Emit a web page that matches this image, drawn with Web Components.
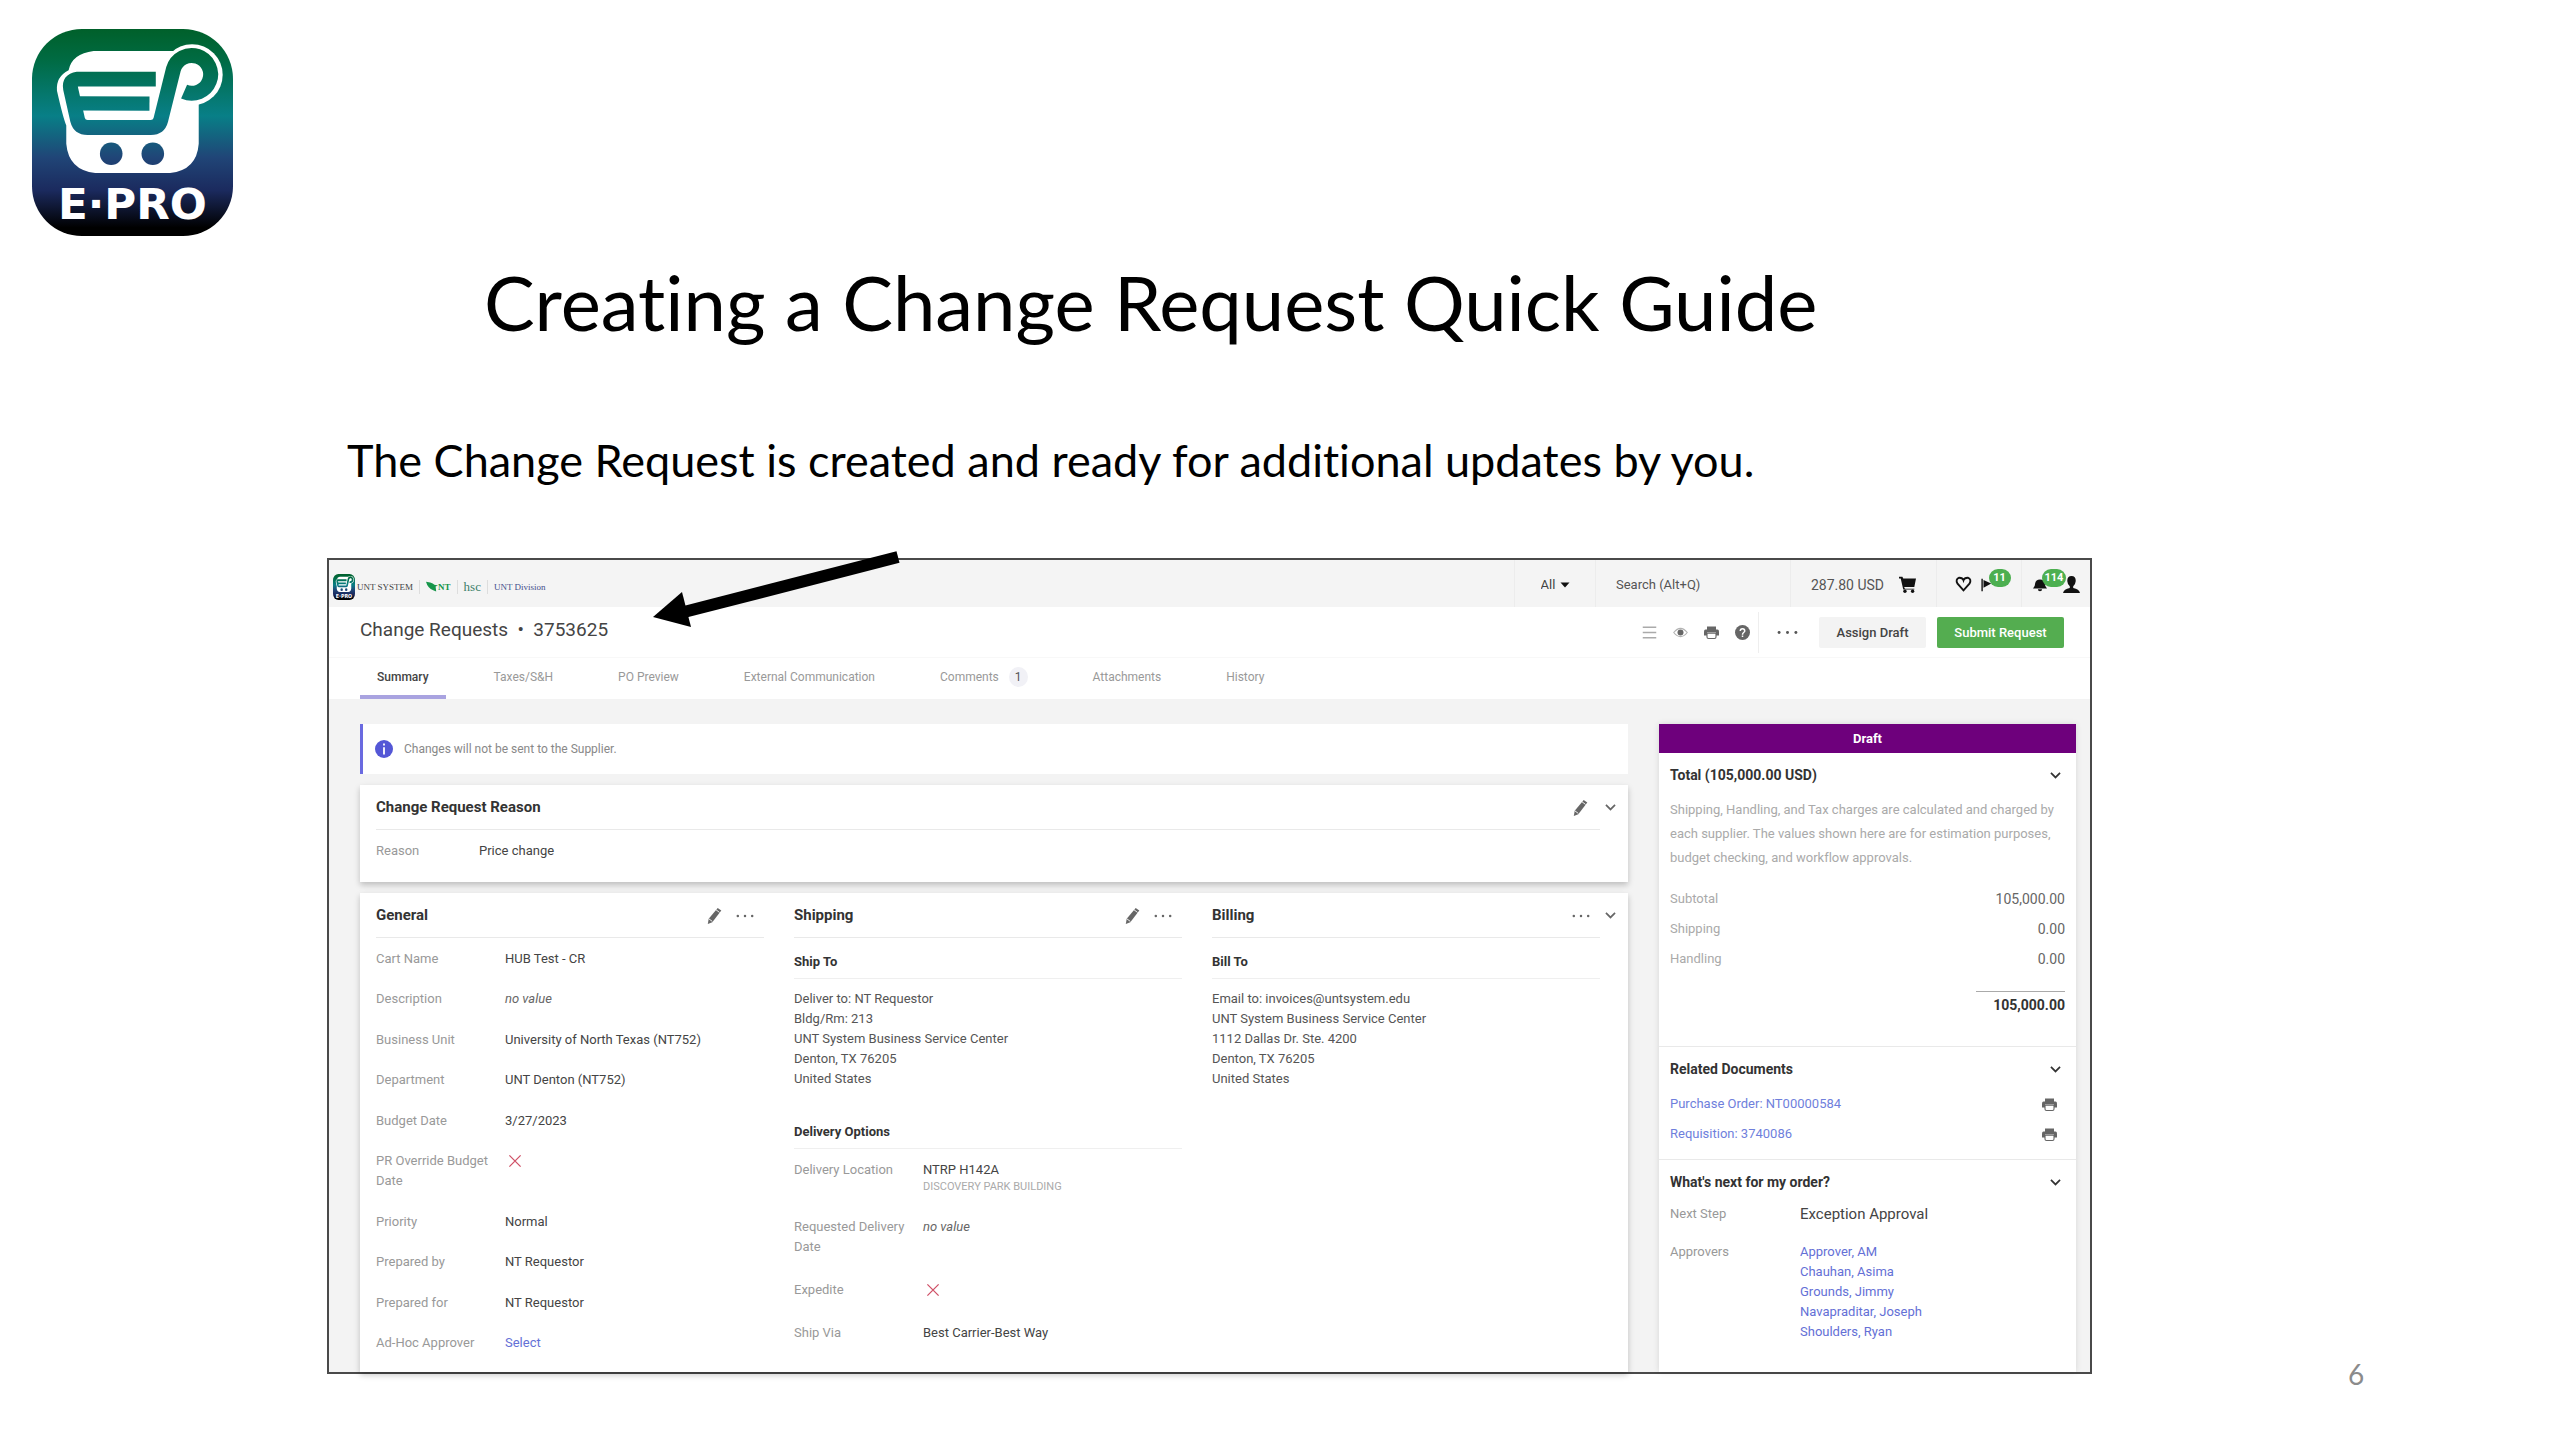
<!DOCTYPE html>
<html lang="en">
<head>
<meta charset="utf-8">
<title>Creating a Change Request Quick Guide</title>
<style>
  body {
    margin: 0;
    background: #fff;
    color: #000;
    font-family: Lato, sans-serif;
  }
</style>
</head>
<body>
<guide-slide page="6">
  <epro-logo slot="logo"></epro-logo>
  <span slot="title">Creating a Change Request Quick Guide</span>
  <span slot="text">The Change Request is created and ready for additional updates by you.</span>
  <request-screen></request-screen>
</guide-slide>

<script>
const ICONS = {
  pencil: '<path fill="currentColor" d="M2 19l1-6L13 1l4 3L7 17z"/><path stroke="#fff" d="M11 3l4 3M3 13l4 3"/>',
  chevron: '<path fill="none" stroke="currentColor" stroke-width="2.6" d="M3 6l7 7 7-7"/>',
  dots: '<g fill="currentColor"><circle cx="2" cy="10" r="1.4"/><circle cx="10" cy="10" r="1.4"/><circle cx="18" cy="10" r="1.4"/></g>',
  list: '<path stroke="currentColor" stroke-width="2" d="M1 3h18M1 10h18M1 17h18"/>',
  eye: '<path fill="none" stroke="currentColor" stroke-width="1.5" opacity="0.5" d="M1 10q9-11 18 0q-9 11-18 0z"/><circle cx="10" cy="10" r="4" fill="currentColor"/>',
  printer: '<path fill="currentColor" d="M4 2h12v4H4zM2 6h16q2 0 2 3v5h-4v-4H4v4H0V9q0-3 2-3z"/><path fill="#fff" stroke="currentColor" stroke-width="1.5" d="M4 11h12v5q0 2-2 2H6q-2 0-2-2z"/>',
  help: '<circle cx="10" cy="10" r="10" fill="currentColor"/><path fill="none" stroke="#fff" stroke-width="2" d="M7 8q0-3 3-3t3 3q0 1-1.500 2T10 13M10 14v2"/>',
  cart: '<path fill="currentColor" d="M0 1h4l1 2h15l-2 10H6l1 2h11v1H5L2 3H0z"/><circle cx="7" cy="18" r="2" fill="currentColor"/><circle cx="16" cy="18" r="2" fill="currentColor"/>',
  heart: '<path fill="none" stroke="currentColor" stroke-width="2.200" d="M10 17L3 9q-3-5 2-7 4 0 5 3 1-3 5-3 5 2 2 7z"/>',
  flag: '<path stroke="currentColor" stroke-width="2" d="M3 1v18"/><path fill="currentColor" d="M5 3l11 5-11 6z"/>',
  bell: '<path fill="currentColor" d="M0 15q3-2 3-7 1-6 7-6t7 6q0 5 3 7zM7 16h6q0 3-3 3t-3-3z"/>',
  person: '<path fill="currentColor" d="M10 0q5 0 5 6 0 3-3 6v2q7 1 8 6H0q1-5 8-6v-2q-3-3-3-6 0-6 5-6z"/>',
  cross: '<path stroke="currentColor" stroke-width="1.800" d="M2 2l16 16M18 2L2 18"/>',
  info: '<circle cx="10" cy="10" r="10" fill="currentColor"/><path stroke="#fff" stroke-width="2" d="M10 4v2M10 8v8"/>',
  caret: '<path fill="currentColor" d="M1 5h18l-9 10z"/>',
  eagle: '<path fill="currentColor" d="M0 3l7 1q5 1 7 4l6 1-4 2 1 8-5-2Q3 14 0 3z"/>'
};

/**
 * ui-icon - small line icon, sized with --size
 */
class UiIcon extends HTMLElement {
  connectedCallback() {
    this.attachShadow({ mode: 'open' }).innerHTML = `
      <style>
        :host { display: block; flex: none; width: var(--size, 18px); height: var(--size, 18px); }
        svg { display: block; width: 100%; height: 100%; }
      </style>
      <svg viewBox="0 0 20 20" aria-hidden="true">${ICONS[this.getAttribute('name')]}</svg>
    `;
  }
}
customElements.define('ui-icon', UiIcon);

/**
 * epro-logo - the E-PRO shopping cart badge
 */
class EproLogo extends HTMLElement {
  connectedCallback() {
    this.attachShadow({ mode: 'open' }).innerHTML = `
      <style>
        :host { display: block; }
        svg { display: block; width: 100%; height: 100%; }
        text { font: 700 131px "DejaVu Sans", sans-serif; }
      </style>
      <svg viewBox="95 84 604 624" preserveAspectRatio="none" role="img" aria-label="E-PRO">
        <defs>
          <linearGradient id="bg" x1="0" y1="84" x2="0" y2="708" gradientUnits="userSpaceOnUse">
            <stop offset="0" stop-color="#00602a"/>
            <stop offset="0.150" stop-color="#006b43"/>
            <stop offset="0.420" stop-color="#087f87"/>
            <stop offset="0.620" stop-color="#204577"/>
            <stop offset="0.780" stop-color="#1b2a5e"/>
            <stop offset="0.960" stop-color="#000"/>
          </linearGradient>
        </defs>
        <rect x="95" y="84" width="604" height="624" rx="150" fill="url(#bg)"/>
        <path fill="#fff" d="M280 150H520L596 300V430Q590 510 510 518H285Q205 510 198 430V375Q188 350 170 270Q166 228 205 208Q215 158 280 150Z"/>
        <circle cx="576" cy="222" r="92" fill="#fff"/>
        <path fill="none" stroke="url(#bg)" stroke-width="45" stroke-linejoin="round" d="M467 235H232Q206 238 211 264L232 358Q238 381 262 381H452Q476 381 482 358L520 205A57 57 0 1 1 552 273"/>
        <path stroke="url(#bg)" stroke-width="43" d="M232 308L448 309"/>
        <circle cx="333" cy="460" r="34" fill="url(#bg)"/>
        <circle cx="458" cy="460" r="34" fill="url(#bg)"/>
        <text x="397" y="658" fill="#fff" text-anchor="middle">E·PRO</text>
      </svg>
    `;
  }
}
customElements.define('epro-logo', EproLogo);

/**
 * guide-slide - one page of the guide: logo, title, text and the screen below
 */
class GuideSlide extends HTMLElement {
  connectedCallback() {
    this.attachShadow({ mode: 'open' }).innerHTML = `
      <style>
        :host {
          display: flex;
          flex-direction: column;
          box-sizing: border-box;
          min-height: 100vh;
          padding: 29px 0 66px;
          font-variant-ligatures: none;
        }
        ::slotted(epro-logo) { width: 201px; height: 207px; margin-left: 32px; }
        h1 {
          margin: 18px 0 0 484px;
          font-size: 76px;
          line-height: 96px;
          font-weight: 400;
        }
        p {
          margin: 80px 0 68px 347px;
          font-size: 45px;
          line-height: 60px;
        }
        .row { flex: 1; display: flex; }
        .screen { flex: 1; display: flex; position: relative; margin-left: 327px; }
        ::slotted(request-screen) { flex: 1; }
        .arrow { position: absolute; left: 325px; top: -8px; width: 250px; height: 80px; }
        footer {
          width: 468px;
          display: flex;
          align-items: flex-end;
          justify-content: center;
          font-size: 28px;
          line-height: 32px;
          color: #8b8b8b;
        }
        footer span { margin: 0 0 -16px 60px; }
      </style>
      <slot name="logo"></slot>
      <h1><slot name="title"></slot></h1>
      <p><slot name="text"></slot></p>
      <div class="row">
        <div class="screen">
          <slot></slot>
          <svg class="arrow" viewBox="0 0 250 80" aria-hidden="true">
            <path stroke="#000" stroke-width="12" d="M246 7L32 62"/>
            <path d="M1 67L30 42L39 77Z"/>
          </svg>
        </div>
        <footer><span>${this.getAttribute('page')}</span></footer>
      </div>
    `;
  }
}
customElements.define('guide-slide', GuideSlide);

/**
 * top-bar - campus logos, search and the user's icons
 */
class TopBar extends HTMLElement {
  connectedCallback() {
    this.attachShadow({ mode: 'open' }).innerHTML = `
      <style>
        :host {
          display: flex;
          height: 47px;
          background: #f4f4f4;
          color: #444;
          font-size: 13px;
        }
        .logos {
          flex: 1;
          display: flex;
          align-items: center;
          font: 9px "Liberation Serif", serif;
          padding: 6px 0 0 4px;
        }
        epro-logo { width: 22px; height: 26px; margin-right: 2px; }
        .logos span { padding-right: 6px; margin-right: 6px; border-right: 1px solid #ddd; line-height: 14px; }
        .logos .unt { display: flex; color: #16964a; font-weight: 700; }
        .logos .unt ui-icon { --size: 12px; color: inherit; }
        .logos .hsc { color: #3d7f6b; font-size: 13px; }
        .logos .div { color: #44508c; border: 0; }
        .cell {
          box-sizing: border-box;
          display: flex;
          align-items: center;
          justify-content: center;
          gap: 4px;
          padding-top: 2px;
          border-left: 1px solid #ececec;
        }
        .all { width: 81px; }
        .search { width: 195px; }
        .cart { width: 146px; gap: 15px; color: #555; font-size: 14px; }
        .marks { width: 85px; gap: 8px; padding-right: 10px; }
        .user { width: 69px; gap: 16px; }
        select, input {
          appearance: none;
          border: 0;
          padding: 0;
          background: none;
          color: inherit;
          font: inherit;
        }
        input { width: 100%; margin-left: 20px; }
        input::placeholder { color: #555; opacity: 1; }
        ui-icon { color: #111; --size: 17px; }
        .all ui-icon { --size: 10px; }
        .badged { position: relative; }
        .badged ui-icon { --size: 14px; }
        .badge {
          position: absolute;
          left: 9px;
          top: -9px;
          min-width: 16px;
          padding: 0 3px;
          border-radius: 9px;
          background: #4caf50;
          color: #fff;
          font-size: 11px;
          font-weight: 700;
          line-height: 18px;
          text-align: center;
        }
      </style>
      <div class="logos">
        <epro-logo></epro-logo>
        <span>UNT SYSTEM</span>
        <span class="unt"><ui-icon name="eagle"></ui-icon>NT</span>
        <span class="hsc">hsc</span>
        <span class="div">UNT Division</span>
      </div>
      <div class="cell all">
        <select aria-label="Search in"><option>All</option></select>
        <ui-icon name="caret"></ui-icon>
      </div>
      <div class="cell search"><input type="search" aria-label="Search" placeholder="Search (Alt+Q)"></div>
      <div class="cell cart">287.80 USD <ui-icon name="cart"></ui-icon></div>
      <div class="cell marks">
        <ui-icon name="heart"></ui-icon>
        <div class="badged"><ui-icon name="flag"></ui-icon><span class="badge">11</span></div>
      </div>
      <div class="cell user">
        <div class="badged"><ui-icon name="bell"></ui-icon><span class="badge">114</span></div>
        <ui-icon name="person"></ui-icon>
      </div>
    `;
  }
}
customElements.define('top-bar', TopBar);

/**
 * request-header - document title, actions and tabs
 */
class RequestHeader extends HTMLElement {
  connectedCallback() {
    this.attachShadow({ mode: 'open' }).innerHTML = `
      <style>
        :host { display: block; background: #fff; }
        .bar {
          display: flex;
          align-items: center;
          height: 50px;
          padding: 0 26px 0 31px;
          border-bottom: 1px solid #f8f8f8;
        }
        h2 { flex: 1; margin: 0; padding-bottom: 5px; font-size: 19px; font-weight: 400; color: #444; white-space: pre; }
        .icons { display: flex; gap: 16px; padding-right: 8px; color: #666; --size: 15px; }
        .icons ui-icon:first-child { color: #aaa; }
        .more { display: flex; align-items: center; height: 41px; padding: 0 21px 0 18px; border-left: 1px solid #eee; color: #555; --size: 21px; }
        button {
          height: 31px;
          border: 0;
          border-radius: 2px;
          padding: 0;
          font: 500 13px Roboto, sans-serif;
        }
        .assign { width: 107px; margin-right: 11px; background: #f3f3f3; color: #444; }
        .submit { width: 127px; background: #54ad50; color: #fff; }
        nav { display: flex; height: 41px; padding-left: 31px; gap: 31px; }
        a {
          display: flex;
          align-items: center;
          gap: 10px;
          padding: 0 17px;
          border-bottom: 4px solid transparent;
          color: #999;
          font-size: 12px;
          text-decoration: none;
        }
        a.on { color: #444; font-weight: 500; border-color: #a9a3e0; }
        .count { padding: 0 6px; border-radius: 50%; background: #f1f1f6; color: #555; line-height: 20px; }
      </style>
      <div class="bar">
        <h2>Change Requests  •  3753625</h2>
        <div class="icons">
          <ui-icon name="list"></ui-icon>
          <ui-icon name="eye"></ui-icon>
          <ui-icon name="printer"></ui-icon>
          <ui-icon name="help"></ui-icon>
        </div>
        <div class="more"><ui-icon name="dots"></ui-icon></div>
        <button class="assign">Assign Draft</button>
        <button class="submit">Submit Request</button>
      </div>
      <nav>
        <a class="on" href="#summary">Summary</a>
        <a href="#taxes">Taxes/S&amp;H</a>
        <a href="#preview">PO Preview</a>
        <a href="#communication">External Communication</a>
        <a href="#comments">Comments <span class="count">1</span></a>
        <a href="#attachments">Attachments</a>
        <a href="#history">History</a>
      </nav>
    `;
  }
}
customElements.define('request-header', RequestHeader);

/**
 * panel-head - heading with its tools and a rule below
 */
class PanelHead extends HTMLElement {
  connectedCallback() {
    const tools = (this.getAttribute('tools') || '').split(' ').filter(Boolean);
    this.attachShadow({ mode: 'open' }).innerHTML = `
      <style>
        :host {
          display: flex;
          align-items: center;
          height: 44px;
          border-bottom: 1px solid #e9e9e9;
          color: #666;
        }
        h3 { flex: 1; margin: 0; color: #333; font-size: 15px; font-weight: 700; line-height: 20px; }
        .tools { display: flex; align-items: center; gap: 12px; padding: 2px 10px 0 0; }
        .chevron { width: 0; --size: 13px; }
        .chevron ui-icon { margin-left: 4px; }
      </style>
      <h3><slot></slot></h3>
      <div class="tools">${tools.map(t => `<ui-icon name="${t}"></ui-icon>`).join('')}</div>
      ${this.hasAttribute('open') ? '<div class="chevron"><ui-icon name="chevron"></ui-icon></div>' : ''}
    `;
  }
}
customElements.define('panel-head', PanelHead);

/**
 * field-row - label on the left, slotted value on the right
 */
class FieldRow extends HTMLElement {
  connectedCallback() {
    this.attachShadow({ mode: 'open' }).innerHTML = `
      <style>
        :host { display: flex; font-size: 13px; line-height: 20px; color: #444; }
        .label { flex: none; box-sizing: border-box; width: var(--label, 129px); padding-right: 8px; color: #999; }
        .value { flex: 1; font-size: var(--value-size, 13px); }
        ::slotted(ui-icon) { --size: 14px; margin: 3px; color: #cf5066; }
        ::slotted(a) { display: block; color: #6470d6; text-decoration: none; }
        ::slotted(i) { color: #666; }
        ::slotted(small) { display: block; font-size: 11px; line-height: 14px; color: #aaa; }
      </style>
      <div class="label">${this.getAttribute('label')}</div>
      <div class="value"><slot></slot></div>
    `;
  }
}
customElements.define('field-row', FieldRow);

/**
 * order-summary - status, totals and related documents
 */
class OrderSummary extends HTMLElement {
  connectedCallback() {
    this.attachShadow({ mode: 'open' }).innerHTML = `
      <style>
        :host {
          display: block;
          background: #fff;
          box-shadow: 0 0 6px rgba(0, 0, 0, 0.12);
          font-size: 13px;
        }
        .status { background: #6e007c; color: #fff; font-weight: 700; line-height: 29px; text-align: center; }
        section { padding: 10px 11px 0; border-bottom: 1px solid #e9e9e9; }
        section:last-child { border: 0; }
        .total { height: 283px; }
        .docs { height: 102px; }
        h3 {
          display: flex;
          align-items: center;
          justify-content: space-between;
          margin: 0;
          padding-right: 3px;
          color: #333;
          font-size: 14px;
          line-height: 24px;
          --size: 13px;
        }
        p { margin: 11px 0 14px; line-height: 24px; color: #aaa; }
        table { width: 100%; border-collapse: collapse; line-height: 30px; color: #666; }
        th { font-weight: 400; text-align: left; color: #aaa; padding: 0; }
        td { text-align: right; padding: 0; font-size: 14px; }
        .sum { width: 89px; margin: 17px 0 0 auto; border-top: 1px solid #aaa; color: #333; font-size: 14px; font-weight: 700; line-height: 27px; text-align: right; }
        .doc { display: flex; align-items: center; justify-content: space-between; padding-right: 8px; line-height: 30px; --size: 15px; color: #666; }
        .docs h3 { margin-bottom: 8px; }
        .doc a { color: #6f7fdc; text-decoration: none; }
        field-row { --label: 130px; margin-top: 10px; }
        .next { --value-size: 15px; }
        field-row + field-row { margin-top: 18px; }
      </style>
      <div class="status">Draft</div>
      <section class="total">
        <h3>Total (105,000.00 USD) <ui-icon name="chevron"></ui-icon></h3>
        <p>Shipping, Handling, and Tax charges are calculated and charged by each supplier. The values shown here are for estimation purposes, budget checking, and workflow approvals.</p>
        <table>
          <tr><th scope="row">Subtotal</th><td>105,000.00</td></tr>
          <tr><th scope="row">Shipping</th><td>0.00</td></tr>
          <tr><th scope="row">Handling</th><td>0.00</td></tr>
        </table>
        <div class="sum">105,000.00</div>
      </section>
      <section class="docs">
        <h3>Related Documents <ui-icon name="chevron"></ui-icon></h3>
        <div class="doc"><a href="#po">Purchase Order: NT00000584</a><ui-icon name="printer"></ui-icon></div>
        <div class="doc"><a href="#req">Requisition: 3740086</a><ui-icon name="printer"></ui-icon></div>
      </section>
      <section>
        <h3>What's next for my order? <ui-icon name="chevron"></ui-icon></h3>
        <field-row class="next" label="Next Step">Exception Approval</field-row>
        <field-row label="Approvers">
          <a href="#a1">Approver, AM</a>
          <a href="#a2">Chauhan, Asima</a>
          <a href="#a3">Grounds, Jimmy</a>
          <a href="#a4">Navapraditar, Joseph</a>
          <a href="#a5">Shoulders, Ryan</a>
        </field-row>
      </section>
    `;
  }
}
customElements.define('order-summary', OrderSummary);

/**
 * request-screen - the whole Change Request page
 */
class RequestScreen extends HTMLElement {
  connectedCallback() {
    this.attachShadow({ mode: 'open' }).innerHTML = `
      <style>
        :host {
          display: flex;
          flex-direction: column;
          box-sizing: border-box;
          border: 2px solid #4a4a4a;
          background: #f3f3f3;
          font-family: Roboto, sans-serif;
        }
        .body { flex: 1; display: flex; gap: 31px; padding: 25px 14px 0 31px; }
        main { flex: 1; display: flex; flex-direction: column; }
        order-summary { width: 417px; }
        .note {
          display: flex;
          align-items: center;
          gap: 11px;
          height: 50px;
          padding-left: 12px;
          border-left: 3px solid #6a6ae0;
          background: #fff;
          color: #888;
          font-size: 12px;
        }
        .note ui-icon { color: #5457d6; }
        .card { background: #fff; box-shadow: 0 3px 6px rgba(0, 0, 0, 0.22); padding: 0 28px 0 16px; }
        .reason { height: 97px; margin: 11px 0; }
        .reason field-row { --label: 103px; margin-top: 11px; }
        .details { flex: 1; display: grid; grid-template-columns: repeat(3, 1fr); gap: 30px; }
        .details > section { display: flex; flex-direction: column; }
        .general .fields { flex: 1; display: flex; flex-direction: column; justify-content: space-between; padding: 11px 0 19px; }
        h4 { margin: 0; font-size: 13px; line-height: 20px; color: #333; padding: 14px 0 6px; border-bottom: 1px solid #efefef; }
        address { font: 13px/20px Roboto, sans-serif; color: #555; padding: 10px 0 30px; white-space: pre-line; }
        .delivery { display: flex; flex-direction: column; padding-top: 11px; gap: 23px; }
        h4.sub { padding-top: 3px; }
      </style>
      <top-bar></top-bar>
      <request-header></request-header>
      <div class="body">
        <main>
          <div class="note"><ui-icon name="info"></ui-icon>Changes will not be sent to the Supplier.</div>
          <section class="card reason">
            <panel-head tools="pencil" open>Change Request Reason</panel-head>
            <field-row label="Reason">Price change</field-row>
          </section>
          <div class="card details">
            <section class="general">
              <panel-head tools="pencil dots">General</panel-head>
              <div class="fields">
                <field-row label="Cart Name">HUB Test - CR</field-row>
                <field-row label="Description"><i>no value</i></field-row>
                <field-row label="Business Unit">University of North Texas (NT752)</field-row>
                <field-row label="Department">UNT Denton (NT752)</field-row>
                <field-row label="Budget Date">3/27/2023</field-row>
                <field-row label="PR Override Budget Date"><ui-icon name="cross"></ui-icon></field-row>
                <field-row label="Priority">Normal</field-row>
                <field-row label="Prepared by">NT Requestor</field-row>
                <field-row label="Prepared for">NT Requestor</field-row>
                <field-row label="Ad-Hoc Approver"><a href="#select">Select</a></field-row>
              </div>
            </section>
            <section>
              <panel-head tools="pencil dots">Shipping</panel-head>
              <h4>Ship To</h4>
              <address>Deliver to: NT Requestor
                Bldg/Rm: 213
                UNT System Business Service Center
                Denton, TX 76205
                United States</address>
              <h4 class="sub">Delivery Options</h4>
              <div class="delivery">
                <field-row label="Delivery Location">NTRP H142A <small>DISCOVERY PARK BUILDING</small></field-row>
                <field-row label="Requested Delivery Date"><i>no value</i></field-row>
                <field-row label="Expedite"><ui-icon name="cross"></ui-icon></field-row>
                <field-row label="Ship Via">Best Carrier-Best Way</field-row>
              </div>
            </section>
            <section>
              <panel-head tools="dots" open>Billing</panel-head>
              <h4>Bill To</h4>
              <address>Email to: invoices@untsystem.edu
                UNT System Business Service Center
                1112 Dallas Dr. Ste. 4200
                Denton, TX 76205
                United States</address>
            </section>
          </div>
        </main>
        <order-summary></order-summary>
      </div>
    `;
  }
}
customElements.define('request-screen', RequestScreen);
</script>
</body>
</html>
